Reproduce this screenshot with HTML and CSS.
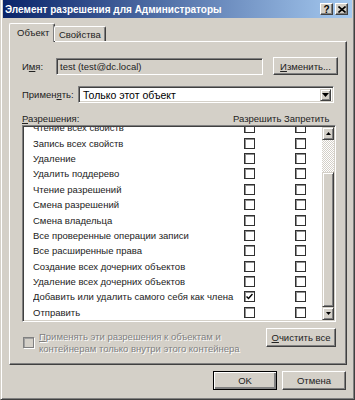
FILE: index.html
```html
<!DOCTYPE html>
<html lang="ru">
<head>
    <meta charset="UTF-8">
    <title>Элемент разрешения для Администраторы</title>
    <link rel="stylesheet" href="styles.css">
</head>
<body>
    <div class="window">
        <div class="titlebar">
            <span class="title">Элемент разрешения для Администраторы</span>
            <div class="caption-btns">
                <span class="cap-btn help">?</span>
                <span class="cap-btn close">
                    <svg width="8" height="7" viewBox="0 0 8 7"><path d="M0.5 0.5 L7.5 6.5 M7.5 0.5 L0.5 6.5" stroke="#000" stroke-width="1.6"/></svg>
                </span>
            </div>
        </div>

        <div class="content">
            <div class="tabs">
                <div class="tab active">Объект</div>
                <div class="tab">Свойства</div>
            </div>

            <div class="panel">
                <div class="row name-row">
                    <span class="label name-label">И<u>м</u>я:</span>
                    <div class="field">test (test@dc.local)</div>
                    <div class="btn change-btn"><u>И</u>зменить...</div>
                </div>

                <div class="row apply-row">
                    <span class="label apply-label">Примен<u>я</u>ть:</span>
                    <div class="select">
                        <span class="select-text">Только этот объект</span>
                        <span class="drop-btn">
                            <svg width="7" height="4" viewBox="0 0 7 4"><polygon points="0,0 7,0 3.5,4" fill="#000"/></svg>
                        </span>
                    </div>
                </div>

                <div class="perm-head">
                    <span class="label"><u>Р</u>азрешения:</span>
                    <span class="col-head allow-head">Разрешить</span>
                    <span class="col-head deny-head">Запретить</span>
                </div>

                <div class="listbox">
                    <div class="list-view">
                        <div class="list-rows">
                            <div class="perm-row"><span class="perm-name">Чтение всех свойств</span><span class="cb"></span><span class="cb"></span></div>
                            <div class="perm-row"><span class="perm-name">Запись всех свойств</span><span class="cb"></span><span class="cb"></span></div>
                            <div class="perm-row"><span class="perm-name">Удаление</span><span class="cb"></span><span class="cb"></span></div>
                            <div class="perm-row"><span class="perm-name">Удалить поддерево</span><span class="cb"></span><span class="cb"></span></div>
                            <div class="perm-row"><span class="perm-name">Чтение разрешений</span><span class="cb"></span><span class="cb"></span></div>
                            <div class="perm-row"><span class="perm-name">Смена разрешений</span><span class="cb"></span><span class="cb"></span></div>
                            <div class="perm-row"><span class="perm-name">Смена владельца</span><span class="cb"></span><span class="cb"></span></div>
                            <div class="perm-row"><span class="perm-name">Все проверенные операции записи</span><span class="cb"></span><span class="cb"></span></div>
                            <div class="perm-row"><span class="perm-name">Все расширенные права</span><span class="cb"></span><span class="cb"></span></div>
                            <div class="perm-row"><span class="perm-name">Создание всех дочерних объектов</span><span class="cb"></span><span class="cb"></span></div>
                            <div class="perm-row"><span class="perm-name">Удаление всех дочерних объектов</span><span class="cb"></span><span class="cb"></span></div>
                            <div class="perm-row"><span class="perm-name">Добавить или удалить самого себя как члена</span><span class="cb checked"><svg width="7" height="7" viewBox="0 0 7 7"><path d="M0.5 3.5 L2.5 5.5 L6.5 1" fill="none" stroke="#000" stroke-width="1.5"/></svg></span><span class="cb"></span></div>
                            <div class="perm-row"><span class="perm-name">Отправить</span><span class="cb"></span><span class="cb"></span></div>
                        </div>
                    </div>
                    <div class="scrollbar">
                        <div class="sb-btn">
                            <svg width="5" height="3" viewBox="0 0 5 3"><polygon points="2.5,0 5,3 0,3" fill="#000"/></svg>
                        </div>
                        <div class="sb-track"></div>
                        <div class="sb-thumb"></div>
                        <div class="sb-btn">
                            <svg width="5" height="3" viewBox="0 0 5 3"><polygon points="0,0 5,0 2.5,3" fill="#000"/></svg>
                        </div>
                    </div>
                </div>

                <div class="bottom-row">
                    <span class="cb disabled-cb"></span>
                    <span class="disabled-text"><u>П</u>рименять эти разрешения к объектам и<br>контейнерам только внутри этого контейнера</span>
                    <div class="btn clear-btn"><u>О</u>чистить все</div>
                </div>
            </div>

            <div class="dialog-btns">
                <div class="btn default-btn">OK</div>
                <div class="btn">Отмена</div>
            </div>
        </div>
    </div>
</body>
</html>
```

FILE: styles.css
```css
* {
    box-sizing: border-box;
}

body {
    margin: 0;
    background-color: #d4d0c8;
    font-family: 'Liberation Sans', Arial, sans-serif;
    font-size: 9.5px;
    color: #222;
}

.window {
    width: 355px;
    height: 400px;
    background-color: #d4d0c8;
    border-left: 1px solid #d4d0c8;
    border-right: 1px solid #404040;
    border-bottom: 1px solid #404040;
    box-shadow: inset 1px 0 #fff, inset -1px -1px #808080;
    padding: 0 2px;
}

.titlebar {
    height: 18px;
    display: flex;
    align-items: center;
    justify-content: space-between;
    padding: 0 4px 0 2px;
    background: linear-gradient(to right, #0a246a, #a6caf0);
}

.titlebar .title {
    color: #fff;
    font-weight: bold;
    font-size: 10px;
}

.caption-btns {
    display: flex;
    gap: 2px;
}

.cap-btn {
    width: 13px;
    height: 12px;
    display: flex;
    align-items: center;
    justify-content: center;
    background-color: #d4d0c8;
    border: 1px solid;
    border-color: #fff #404040 #404040 #fff;
    box-shadow: inset -1px -1px #808080;
    font-weight: bold;
    font-size: 10px;
    color: #000;
}

.content {
    padding: 5px 5px 0 6px;
}

.tabs {
    display: flex;
    align-items: flex-end;
    height: 18px;
    position: relative;
    z-index: 1;
}

.tab {
    height: 15px;
    padding: 0 4px;
    display: flex;
    align-items: center;
    background-color: #d4d0c8;
    border: 1px solid;
    border-bottom: none;
    border-color: #fff #404040 #fff #fff;
    box-shadow: inset -1px 0 #808080;
    border-radius: 2px 2px 0 0;
}

.tab.active {
    width: 46px;
    height: 19px;
    margin-bottom: -1px;
    padding-left: 7px;
    padding-bottom: 2px;
}

.tab + .tab {
    margin-left: -1px;
}

.panel {
    height: 324px;
    border: 1px solid;
    border-color: #fff #404040 #404040 #fff;
    box-shadow: inset -1px -1px #808080;
    padding: 0 0 0 12px;
}

.row {
    display: flex;
    align-items: center;
}

.label {
    white-space: nowrap;
}

.name-row {
    margin-top: 15px;
    height: 18px;
}

.name-label {
    width: 34px;
}

.field {
    width: 207px;
    height: 17px;
    display: flex;
    align-items: center;
    padding-left: 3px;
    border: 1px solid;
    border-color: #808080 #fff #fff #808080;
    box-shadow: inset 1px 1px #404040, inset -1px -1px #d4d0c8;
}

.btn {
    height: 18px;
    display: flex;
    align-items: center;
    justify-content: center;
    background-color: #d4d0c8;
    border: 1px solid;
    border-color: #fff #404040 #404040 #fff;
    box-shadow: inset -1px -1px #808080;
    white-space: nowrap;
}

.change-btn {
    width: 65px;
    margin-left: 10px;
}

.apply-row {
    margin-top: 11px;
    height: 17px;
}

.apply-label {
    width: 56px;
}

.select {
    width: 256px;
    height: 17px;
    display: flex;
    align-items: center;
    justify-content: space-between;
    background-color: #fff;
    border: 1px solid;
    border-color: #808080 #fff #fff #808080;
    box-shadow: inset 1px 1px #404040, inset -1px -1px #d4d0c8;
    padding: 2px 2px 2px 4px;
}

.select-text {
    font-size: 10.5px;
    color: #000;
}

.drop-btn {
    width: 11px;
    height: 12px;
    display: flex;
    align-items: center;
    justify-content: center;
    border: 1px solid;
    border-color: #d4d0c8 #404040 #404040 #d4d0c8;
    box-shadow: inset 1px 1px #fff, inset -1px -1px #808080;
    background-color: #d4d0c8;
}

.perm-head {
    display: flex;
    align-items: center;
    margin-top: 9px;
    height: 13px;
}

.perm-head .label {
    width: 211px;
}

.allow-head {
    width: 51px;
}

.listbox {
    width: 314px;
    height: 197px;
    display: flex;
    border: 1px solid;
    border-color: #808080 #fff #fff #808080;
    box-shadow: inset 1px 1px #404040, inset -1px -1px #d4d0c8;
    padding: 1px;
}

.list-view {
    flex: 1;
    background-color: #fff;
    overflow: hidden;
}

.list-rows {
    margin-top: -7px;
}

.perm-row {
    height: 15.4px;
    display: flex;
    align-items: center;
    padding-left: 9px;
}

.perm-name {
    width: 211px;
    white-space: nowrap;
    overflow: hidden;
}

.cb {
    width: 11px;
    height: 11px;
    flex: none;
    display: flex;
    align-items: center;
    justify-content: center;
    background-color: #fff;
    border: 1px solid #303030;
    box-shadow: inset 1px 1px #909090;
}

.perm-row .cb + .cb {
    margin-left: 40px;
}

.scrollbar {
    width: 12px;
    display: flex;
    flex-direction: column;
}

.sb-btn {
    height: 13px;
    display: flex;
    align-items: center;
    justify-content: center;
    background-color: #d4d0c8;
    border: 1px solid;
    border-color: #d4d0c8 #404040 #404040 #d4d0c8;
    box-shadow: inset 1px 1px #fff, inset -1px -1px #808080;
}

.sb-track {
    height: 32px;
    background: repeating-conic-gradient(#fff 0 25%, #d4d0c8 0 50%) 0 0 / 2px 2px;
}

.sb-thumb {
    flex: 1;
    background-color: #d4d0c8;
    border: 1px solid;
    border-color: #d4d0c8 #404040 #404040 #d4d0c8;
    box-shadow: inset 1px 1px #fff, inset -1px -1px #808080;
}

.bottom-row {
    display: flex;
    align-items: flex-start;
    margin-top: 6px;
    width: 314px;
}

.disabled-cb {
    margin-top: 9px;
    margin-left: 1px;
    background-color: #d4d0c8;
    border-color: #808080;
    box-shadow: inset 1px 1px #a0a0a0, 1px 1px #fff;
}

.disabled-text {
    margin-left: 5px;
    margin-top: 3px;
    line-height: 12px;
    color: #808080;
    text-shadow: 1px 1px #fff;
}

.clear-btn {
    width: 70px;
    height: 19px;
    margin-left: auto;
}

.dialog-btns {
    display: flex;
    justify-content: flex-end;
    gap: 5px;
    margin-top: 6px;
    padding-right: 1px;
}

.dialog-btns .btn {
    width: 64px;
    height: 19px;
}

.dialog-btns .default-btn {
    border-color: #000;
    box-shadow: inset 1px 1px #fff, inset -2px -2px #808080;
}
```
